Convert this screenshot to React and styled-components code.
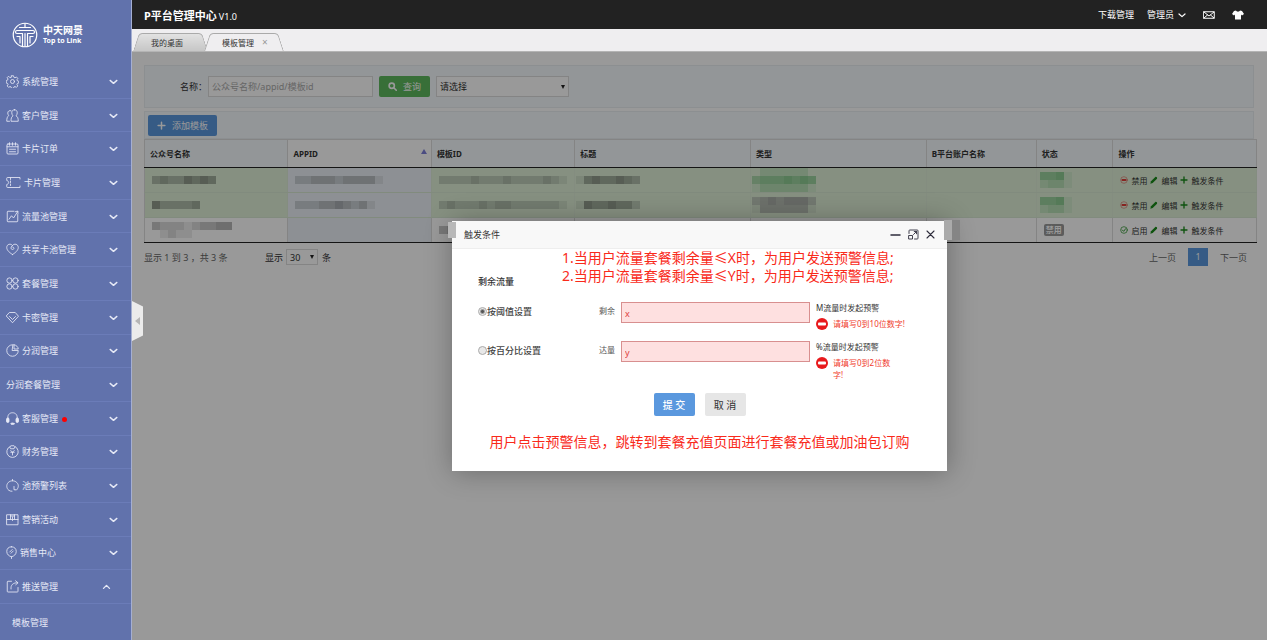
import styled, { createGlobalStyle, css } from "styled-components";

const GlobalStyle = createGlobalStyle`
	* {
		box-sizing: border-box;
	}

	body {
		margin: 0;
		font-family: "Noto Sans", "Noto Sans CJK SC", sans-serif;
		font-size: 9px;
		color: #333;
	}

	button,
	input,
	select {
		font: inherit;
	}

	a {
		color: inherit;
		text-decoration: none;
	}
`;

/* ---------- icons ---------- */

const StrokeIcon = styled.svg`
	flex: none;
	width: ${({ $w = 13 }) => $w}px;
	height: ${({ $h = 13 }) => $h}px;
	fill: none;
	stroke: currentColor;
	stroke-width: ${({ $stroke = 1.7 }) => $stroke};
	stroke-linecap: round;
	stroke-linejoin: round;
`;

const ICONS = {
	gear: (
		<>
			<circle cx="13" cy="13" r="4" />
			<path d="M11 1.500h4l.8 3.200 2.200.9 2.800-1.700 2.800 2.800-1.700 2.800.9 2.200 2.700.8v3.600l-2.700.8-.9 2.200 1.700 2.800-2.800 2.800-2.800-1.700-2.200.9-.8 2.900h-4l-.8-2.900-2.200-.9-2.800 1.700-2.800-2.800 1.700-2.800-.9-2.200-2.700-.8V11l2.700-.8.9-2.200-1.700-2.800 2.800-2.800L8 5.600l2.200-.9z" />
		</>
	),
	users: (
		<>
			<path d="M10 3.500C7 2 3.500 4.500 3.500 8c0 2 .8 3.500 2 5-3 2-4 6-4 11.500H7" />
			<path d="M17 1.500c3.500 0 5.500 2.500 5.500 6 0 2.500-1 4.500-2.500 6 3.500 2 4.500 5 4.500 11H10c0-6 1-9 4-11-1.500-1.500-2.500-3.500-2.500-6 0-3.500 2-6 5.500-6z" />
		</>
	),
	calendar: (
		<>
			<rect x="2" y="4" width="22" height="20" rx="2" />
			<path d="M2 9.500h22M7 1.500v5M13 1.500v5M19 1.500v5M7 14.500h12M7 19.500h12" />
		</>
	),
	card: (
		<path d="M28 6V3H3a1.500 1.500 0 0 0-1.500 1.500V9c5 1 5 7 0 8v4.500A1.500 1.500 0 0 0 3 23h25v-3M9 4v3M9 10v3M9 16v3" />
	),
	flow: (
		<path d="M16 2.500H4A1.500 1.500 0 0 0 2.500 4v18A1.500 1.500 0 0 0 4 23.500h18a1.500 1.500 0 0 0 1.500-1.500V9M6 18.500l5-7 4 4.500L23.500 3M18.500 3.500l5-1.500.5 5" />
	),
	heart: (
		<path d="M13 23C8 20 1.500 15 1.500 9c0-7 8-8.500 11.500-4 3.500-4.500 11.500-3 11.500 4 0 6-6.500 11-11.500 14zM13 5c-4 2-4 8 0 8s3.500-5 .5-5" />
	),
	clover: (
		<>
			<circle cx="7" cy="7" r="5.300" />
			<circle cx="19" cy="7" r="5.300" />
			<circle cx="7" cy="19" r="5.300" />
			<circle cx="19" cy="19" r="5.300" />
		</>
	),
	gem: (
		<path d="M7.500 3h11L25 10.500 13 23.500 1 10.500zM7 11l6 6 6-6" />
	),
	pie: (
		<>
			<path d="M13 1.500A11.500 11.500 0 1 0 24.500 13H13z" />
			<path d="M16 1.500V10h8.500C24.500 6 20.500 2 16 1.500z" />
		</>
	),
	headset: (
		<>
			<path d="M4 14C2 6 7 1.500 13 1.500S24 6 22 14" />
			<rect x="1" y="12" width="5" height="9" rx="2.500" fill="currentColor" />
			<rect x="20" y="12" width="5" height="9" rx="2.500" fill="currentColor" />
			<ellipse cx="13" cy="23.500" rx="3.500" ry="1.500" fill="currentColor" />
		</>
	),
	money: (
		<>
			<path d="M8 3a11.500 11.500 0 1 0 10 0M8 3.500L10 1.500h6l2 2-2 4h-6z" />
			<path d="M9.500 11l3.500 3.500 3.500-3.500M9.500 14.500h7M13 14.500V20" />
		</>
	),
	pool: (
		<path d="M21 22C25.500 18 26 11 21.500 7 17 2.500 9 2.500 4.500 7S1 19 5.500 22.500c2 1.500 4 2 6.500 2M13 1v2.500M16 15v6.500h4" />
	),
	box: (
		<path d="M2 3.500h22v20H2zM2 13h7M17 13h7M9 3.500V13h3M17 3.500V13h-3M13 8v7M9 6h8" />
	),
	balloon: (
		<path d="M11 1.500c6 0 9.500 4 9.500 9.500S16 20.500 11 21.500C6 20.500 1.500 16.500 1.500 11S5 1.500 11 1.500zM11 21.500V25M7.500 12l5-5M10 14.500l4.500-4.500" />
	),
	share: (
		<path d="M11 2.500H4A1.500 1.500 0 0 0 2.500 4v18.500A1.500 1.500 0 0 0 4 24h18.500a1.500 1.500 0 0 0 1.500-1.500V15M10 18C9 10 14 5 23.500 5.500M19 1.500l5 4-4.500 4" />
	),
};

const Chevron = ({ up, size = 9 }) => (
	<StrokeIcon $w={size} $h={size} $stroke={1.8} viewBox="0 0 12 12">
		<path d={up ? "M2 8.500l4-4 4 4" : "M1.500 4.500L6 8.500l4.500-4"} />
	</StrokeIcon>
);

const Plus = ({ size = 8 }) => (
	<StrokeIcon $w={size} $h={size} $stroke={2} viewBox="0 0 12 12">
		<path d="M6 1.500v9M1.500 6h9" />
	</StrokeIcon>
);

/* ---------- shell ---------- */

const Page = styled.div`
	position: relative;
	display: flex;
	height: 100vh;
	overflow: hidden;
`;

const Sidebar = styled.aside`
	display: flex;
	flex-direction: column;
	flex: none;
	width: 132px;
	background: #6172ac;
	border-right: 1px solid #a5afd2;
	color: #e6e9f6;
`;

const Logo = styled.a`
	display: flex;
	align-items: center;
	gap: 5px;
	height: 65px;
	padding: 5px 0 0 12px;
	color: #fff;
`;

const LogoText = styled.span`
	display: flex;
	flex-direction: column;
	font-weight: 700;
`;

const LogoName = styled.span`
	font-size: 10px;
	line-height: 11px;
`;

const LogoSlogan = styled.span`
	font-size: 7px;
	line-height: 9px;
`;

const Menu = styled.nav`
	flex: 1;
	display: grid;
	grid-auto-rows: minmax(33px, 1fr);
`;

const MenuItem = styled.a`
	display: flex;
	align-items: center;
	gap: 3px;
	padding: 0 ${({ $open }) => ($open ? 20 : 13)}px 0 6px;
	border-bottom: 1px solid #6b7cb8;
`;

const MenuLabel = styled.span`
	flex: 1;
`;

const Dot = styled.i`
	display: inline-block;
	width: 5px;
	height: 5px;
	margin-left: 4px;
	border-radius: 50%;
	background: #f00;
	vertical-align: middle;
`;

const SubItem = styled.a`
	display: flex;
	align-items: center;
	height: 36px;
	padding-left: 12px;
`;

const Column = styled.div`
	flex: 1;
	min-width: 0;
	display: flex;
	flex-direction: column;
`;

const TopBar = styled.header`
	display: flex;
	align-items: center;
	height: 29px;
	padding: 0 23px 0 12px;
	background: #222;
	color: #fff;
`;

const Title = styled.h1`
	margin: 0;
	font-size: 11px;
	font-weight: 700;
`;

const Version = styled.span`
	flex: 1;
	padding: 3px 0 0 2px;
`;

const TopLinks = styled.div`
	display: flex;
	align-items: center;
`;

const TopLink = styled.a`
	display: flex;
	align-items: center;
	gap: 4px;
	margin-left: ${({ $gap = 13 }) => $gap}px;
`;

const TabBar = styled.div`
	display: flex;
	align-items: flex-end;
	height: 23px;
	padding-left: 4px;
	background: #efeef0;
	border-bottom: 1px solid #b4b4b4;
`;

const TabGroup = styled.div`
	display: flex;
	isolation: isolate;
`;

const Tab = styled.div`
	position: relative;
	z-index: ${({ $active }) => ($active ? 1 : 0)};
	display: flex;
	align-items: center;
	gap: 8px;
	width: ${({ $active }) => ($active ? 74 : 69)}px;
	height: 18px;
	margin-right: 2px;
	padding-left: 15px;
	font-size: 8px;

	&::before,
	&::after {
		content: "";
		position: absolute;
		z-index: -1;
		top: 0;
		bottom: 0;
		width: 60%;
		border: 1px solid #aaa;
		border-bottom: 0;
		background: ${({ $active }) =>
			$active ? "#efeef0" : "linear-gradient(#e2e2e2, #c6c6c6)"};
	}

	&::before {
		left: 0;
		border-right: 0;
		border-radius: 4px 0 0 0;
		transform: skewX(-18deg);
	}

	&::after {
		right: 0;
		border-left: 0;
		border-radius: 0 4px 0 0;
		transform: skewX(18deg);
	}
`;

const TabClose = styled.button`
	padding: 0;
	border: 0;
	background: none;
	color: #999;
	font-size: 10px;
	line-height: 10px;
`;

const Handle = styled.button`
	position: absolute;
	z-index: 3;
	top: 50%;
	left: 132px;
	width: 11px;
	height: 40px;
	margin-top: -19px;
	padding: 0 0 0 3px;
	border: 0;
	background: #ebebeb;
	clip-path: polygon(0 0, 100% 14%, 100% 86%, 0 100%);

	&::before {
		content: "";
		display: block;
		width: 0;
		border: 4px solid transparent;
		border-left: 0;
		border-right: 5px solid #b5b5b5;
	}
`;

const Content = styled.main`
	position: relative;
	flex: 1;
	display: flex;
	flex-direction: column;
	padding: 13px 10px 0 12px;
	background: #fff;
`;

/* ---------- filters ---------- */

const Panel = styled.div`
	display: flex;
	align-items: center;
	height: ${({ $tall }) => ($tall ? 43 : 28)}px;
	margin: 0 3px ${({ $tall }) => ($tall ? 3 : 0)}px 0;
	padding-left: ${({ $tall }) => ($tall ? 35 : 3)}px;
	border: 1px solid #e9eef2;
	background: #f5fafe;
`;

const SearchInput = styled.input`
	width: 165px;
	height: 21px;
	margin: 0 6px 0 1px;
	padding: 0 3px;
	border: 1px solid #ddd;
	background: #fff;

	&::placeholder {
		color: #aaa;
	}
`;

const Button = styled.button`
	display: flex;
	align-items: center;
	justify-content: center;
	gap: 6px;
	height: 21px;
	padding: 0 9px;
	border: 0;
	border-radius: 2px;
	background: ${({ $color }) => $color};
	color: #fff;
`;

const Select = styled.select`
	appearance: none;
	width: ${({ $w }) => $w}px;
	height: ${({ $h }) => $h}px;
	padding: 0 3px;
	border: 1px solid #ddd;
	border-radius: 0;
	background: #fff;
	color: #333;
`;

const SelectBox = styled.span`
	position: relative;
	display: inline-flex;
	margin: 0 4px 0 ${({ $gap }) => $gap}px;

	&::after {
		content: "";
		position: absolute;
		top: 50%;
		right: 4px;
		margin-top: -2px;
		border: 2px solid transparent;
		border-top: 4px solid #222;
		border-bottom: 0;
		pointer-events: none;
	}
`;

/* ---------- table ---------- */

const Table = styled.table`
	width: 100%;
	table-layout: fixed;
	border-collapse: collapse;
	border: 1px solid #ddd;
	border-bottom: 1px solid #222;
	font-size: 8px;
`;

const Th = styled.th`
	position: relative;
	width: ${({ $w }) => $w}%;
	height: 28px;
	padding: 0 5px;
	border-right: 1px solid #ddd;
	border-bottom: 1px solid #222;
	background: ${({ $sorted }) => ($sorted ? "#fff" : "#f5fafe")};
	text-align: left;
	font-weight: 700;

	${({ $sorted }) =>
		$sorted &&
		css`
			&::after {
				content: "";
				position: absolute;
				top: 9px;
				right: 4px;
				border: 3px solid transparent;
				border-top: 0;
				border-bottom: 5px solid #7d7fd8;
			}
		`}
`;

const BodyRow = styled.tr`
	&:last-child td {
		border-bottom: 1px solid #222;
	}
`;

const Td = styled.td`
	height: 25px;
	padding: 0 7px;
	border-right: 1px solid ${({ $green }) => ($green ? "#dcecd6" : "#ddd")};
	border-bottom: 1px solid ${({ $green }) => ($green ? "#d8e8d2" : "#ddd")};
	background: ${({ $green, $sorted }) =>
		$sorted ? "#ebf1f7" : $green ? "#dff0d8" : "#fff"};
`;

const MosaicBox = styled.div`
	margin-left: ${({ $shift = 0 }) => $shift}px;
`;

const MosaicRow = styled.div`
	display: flex;
`;

const MosaicCell = styled.i`
	width: 8px;
	height: 8px;
	background: ${({ $tone }) => $tone};
`;

const TONES = { gray: "#000", green: "#1f9a35", purple: "#4a3a52" };

// every digit of a line is the darkness of one block
const Mosaic = ({ lines, tone = "gray", shift }) => (
	<MosaicBox $shift={shift}>
		{lines.map((line, y) => (
			<MosaicRow key={y}>
				{line.split("").map((c, x) => (
					<MosaicCell key={x} $tone={TONES[tone]} style={{ opacity: c * 0.07 }} />
				))}
			</MosaicRow>
		))}
	</MosaicBox>
);

const Badge = styled.span`
	display: inline-block;
	padding: 0 2px;
	border-radius: 2px;
	background: #999;
	color: #fff;
	font-weight: 700;
	line-height: 12px;
`;

const Actions = styled.div`
	display: flex;
	gap: 3px;
`;

const Action = styled.a`
	display: flex;
	align-items: center;
	gap: 3px;
	white-space: nowrap;

	svg {
		color: ${({ $color = "#188a18" }) => $color};
	}
`;

const TableFoot = styled.div`
	display: flex;
	align-items: center;
	height: 28px;
	color: #333;
`;

const Info = styled.span`
	width: 121px;
	color: #666;
	word-spacing: normal;
`;

const Pager = styled.div`
	flex: 1;
	display: flex;
	align-items: center;
	justify-content: flex-end;
	gap: 12px;
	padding-right: 10px;
	color: #666;
`;

const PageNumber = styled.a`
	width: 20px;
	line-height: 18px;
	background: #5a98de;
	color: #fff;
	text-align: center;
`;

/* ---------- dialog ---------- */

const Shade = styled.div`
	position: absolute;
	inset: 0;
	z-index: 2;
	display: flex;
	align-items: center;
	justify-content: center;
	background: rgba(0, 0, 0, 0.4);
`;

const Dialog = styled.section`
	position: relative;
	width: 495px;
	background: #fff;
	box-shadow: 1px 1px 26px rgba(0, 0, 0, 0.3);
`;

const DialogHead = styled.div`
	display: flex;
	align-items: center;
	height: 28px;
	padding: 0 12px;
	border-bottom: 1px solid #eee;
	background: #f8f8f8;
`;

const DialogTitle = styled.h2`
	flex: 1;
	margin: 0;
	font-size: 9px;
	font-weight: 400;
`;

const HeadButton = styled.button`
	display: flex;
	margin-left: 7px;
	padding: 0;
	border: 0;
	background: none;
	color: #2e2d3c;
`;

const BlurEdge = styled.i`
	position: absolute;
	top: ${({ $right }) => ($right ? -1 : 1)}px;
	${({ $right }) => ($right ? "right: -13px" : "left: -4px")};
	width: ${({ $right }) => ($right ? 16 : 8)}px;
	height: ${({ $right }) => ($right ? 20 : 16)}px;
	background: ${({ $right }) =>
		$right ? "linear-gradient(90deg, #aaa 50%, #858585 50%)" : "#b8b8b8"};
`;

const Intro = styled.div`
	display: flex;
	align-items: flex-end;
	height: 40px;
	padding-left: 26px;
`;

const IntroLabel = styled.span`
	width: 84px;
	font-weight: 500;
	line-height: 15px;
`;

const Note = styled.p`
	margin: 0;
	color: #f92a1b;
	font-size: 14px;
	line-height: 18px;
	white-space: nowrap;
	align-self: flex-start;
	text-align: ${({ $center }) => ($center ? "center" : "left")};
`;

const Form = styled.form`
	padding: 13px 0 20px;
`;

const FormRow = styled.div`
	display: grid;
	grid-template-columns: 100px 37px 189px 1fr;
	align-items: start;
	min-height: 39px;
	padding-left: 26px;
`;

const RadioLabel = styled.label`
	display: flex;
	align-items: center;
	height: 18px;
	color: #444;
	font-weight: 500;
`;

const Radio = styled.input`
	appearance: none;
	width: 9px;
	height: 9px;
	margin: 0;
	border: 1px solid #aaa;
	border-radius: 50%;
	background: #e8e8e8;

	&:checked {
		background: radial-gradient(#555 0 1px, #e8e8e8 3px);
	}
`;

const FieldLabel = styled.label`
	color: #555;
	font-size: 8px;
	line-height: 17px;
	text-align: right;
`;

const FieldInput = styled.input`
	width: 100%;
	height: 21px;
	padding: 2px 3px 0;
	border: 1px solid #d88f8f;
	background: #fee0e0;
	color: #e0403f;
`;

const Field = styled.div`
	margin: 0 -6px 0 6px;
`;

const Hint = styled.div`
	padding-left: 12px;
	font-size: 8px;
	line-height: 12px;
`;

const ErrorText = styled.div`
	display: flex;
	gap: 5px;
	width: ${({ $narrow }) => ($narrow ? 76 : 110)}px;
	margin-top: 4px;
	color: #f03c2e;

	svg {
		flex: none;
	}
`;

const DialogButtons = styled.div`
	display: flex;
	justify-content: center;
	gap: 10px;
	padding: 12px 0 17px;
`;

const DialogButton = styled.button`
	width: 41px;
	height: 23px;
	padding: 0;
	border: 0;
	border-radius: 2px;
	background: ${({ $primary }) => ($primary ? "#5a98de" : "#e6e6e6")};
	color: ${({ $primary }) => ($primary ? "#fff" : "#333")};
	font-size: 10px;
	font-weight: ${({ $primary }) => ($primary ? 500 : 400)};
`;

const MENU = [
	{ icon: "gear", label: "系统管理" },
	{ icon: "users", label: "客户管理" },
	{ icon: "calendar", label: "卡片订单" },
	{ icon: "card", label: "卡片管理", iconWidth: 15 },
	{ icon: "flow", label: "流量池管理" },
	{ icon: "heart", label: "共享卡池管理" },
	{ icon: "clover", label: "套餐管理" },
	{ icon: "gem", label: "卡密管理" },
	{ icon: "pie", label: "分润管理" },
	{ label: "分润套餐管理" },
	{ icon: "headset", label: "客服管理", dot: true },
	{ icon: "money", label: "财务管理" },
	{ icon: "pool", label: "池预警列表" },
	{ icon: "box", label: "营销活动" },
	{ icon: "balloon", label: "销售中心", iconWidth: 11 },
	{ icon: "share", label: "推送管理", open: true },
];

const COLUMNS = [
	{ name: "公众号名称", width: 12.9 },
	{ name: "APPID", width: 12.9, sorted: true },
	{ name: "模板ID", width: 12.9 },
	{ name: "标题", width: 15.8 },
	{ name: "类型", width: 15.8 },
	{ name: "B平台账户名称", width: 9.9 },
	{ name: "状态", width: 6.9 },
	{ name: "操作", width: 12.9 },
];

const ROWS = [
	{
		active: true,
		name: ["34335454"],
		appid: ["22333233331"],
		template: ["2222322232222321"],
		title: ["14544543"],
		type: ["02222220", "45556565", "13333331"],
		tone: "green",
	},
	{
		active: true,
		name: ["533334"],
		appid: ["2223343231"],
		template: ["2322232332222221"],
		title: ["15445442"],
		type: ["34545553", "14444441"],
		tone: "purple",
	},
	{
		name: ["3222123344", "0121100000"],
		template: ["34"],
	},
];

const SidebarMenu = () => (
	<Sidebar>
		<Logo href="#">
			<StrokeIcon $w={26} $h={26} $stroke={2.4} viewBox="0 0 52 52">
				<circle cx="26" cy="26" r="23.500" />
				<path d="M15 11h22M26 3v8M10 17h32c2 0 3 1 3 3s-1 3-3 3H31v25M42 23H31M10 17c-2 0-3 1-3 3s1 3 3 3h11v25M10 29h6v13M42 29h-6v13M26 23v26" />
			</StrokeIcon>
			<LogoText>
				<LogoName>中天网景</LogoName>
				<LogoSlogan>Top to Link</LogoSlogan>
			</LogoText>
		</Logo>
		<Menu>
			{MENU.map(({ icon, label, iconWidth = 13, dot, open }) => (
				<MenuItem key={label} href="#" $open={open}>
					{icon && (
						<StrokeIcon $w={iconWidth} viewBox={`0 0 ${iconWidth * 2} 26`}>
							{ICONS[icon]}
						</StrokeIcon>
					)}
					<MenuLabel>
						{label}
						{dot && <Dot />}
					</MenuLabel>
					<Chevron up={open} />
				</MenuItem>
			))}
		</Menu>
		<SubItem href="#">模板管理</SubItem>
	</Sidebar>
);

const Header = () => (
	<TopBar>
		<Title>P平台管理中心</Title>
		<Version>V1.0</Version>
		<TopLinks>
			<TopLink href="#">下载管理</TopLink>
			<TopLink href="#">
				管理员 <Chevron size={8} />
			</TopLink>
			<TopLink href="#" aria-label="消息" $gap={17}>
				<StrokeIcon $w={12} $h={8} $stroke={2} viewBox="0 0 24 16">
					<path d="M1.500 1.500h21v13h-21zM2 2l10 8L22 2M2 14l7-6M22 14l-7-6" />
				</StrokeIcon>
			</TopLink>
			<TopLink href="#" aria-label="换肤" $gap={17}>
				<svg width="12" height="10" viewBox="0 0 24 20" fill="currentColor">
					<path d="M8 1c1 3 7 3 8 0l4 1 4 6-4 3-2-2v10H6V9l-2 2-4-3 4-6z" />
				</svg>
			</TopLink>
		</TopLinks>
	</TopBar>
);

const RowActions = ({ active }) => (
	<Actions>
		<Action href="#" $color={active ? "#e00000" : "#188a18"}>
			<StrokeIcon $w={8} $h={8} $stroke={1} viewBox="0 0 12 12">
				<circle cx="6" cy="6" r="5" strokeOpacity={active ? 0.5 : 1} />
				{active ? (
					<path d="M3.500 6h5" strokeWidth="2.500" />
				) : (
					<path d="M3.500 6l2 2 3-4" strokeWidth="1.300" />
				)}
			</StrokeIcon>
			{active ? "禁用" : "启用"}
		</Action>
		<Action href="#">
			<svg width="8" height="8" viewBox="0 0 12 12" fill="currentColor">
				<path d="M.5 11.500l1-3.500L8 1.500c1-1 3.500 1 2.500 2.500L4 10.500z" />
			</svg>
			编辑
		</Action>
		<Action href="#">
			<Plus />
			触发条件
		</Action>
	</Actions>
);

const TemplateTable = () => (
	<Table>
		<thead>
			<tr>
				{COLUMNS.map(({ name, width, sorted }) => (
					<Th key={name} $w={width} $sorted={sorted}>
						{name}
					</Th>
				))}
			</tr>
		</thead>
		<tbody>
			{ROWS.map((row, i) => (
				<BodyRow key={i}>
					<Td $green={row.active}>
						<Mosaic lines={row.name} />
					</Td>
					<Td $green={row.active} $sorted>
						{row.appid && <Mosaic lines={row.appid} />}
					</Td>
					<Td $green={row.active}>
						<Mosaic lines={row.template} />
					</Td>
					<Td $green={row.active}>
						{row.title && <Mosaic lines={row.title} shift={-6} />}
					</Td>
					<Td $green={row.active}>
						{row.type && <Mosaic lines={row.type} tone={row.tone} shift={-6} />}
					</Td>
					<Td $green={row.active} />
					<Td $green={row.active}>
						{row.active ? (
							<Mosaic lines={["5561", "2331"]} tone="green" shift={-4} />
						) : (
							<Badge>禁用</Badge>
						)}
					</Td>
					<Td $green={row.active}>
						<RowActions active={row.active} />
					</Td>
				</BodyRow>
			))}
		</tbody>
	</Table>
);

const ErrorMessage = ({ children, narrow }) => (
	<ErrorText role="alert" $narrow={narrow}>
		<svg width="12" height="12" viewBox="0 0 24 24">
			<circle cx="12" cy="12" r="12" fill="#e8191c" />
			<rect x="4" y="9" width="16" height="6" rx="2" fill="#fff" />
		</svg>
		<span>{children}</span>
	</ErrorText>
);

const TriggerDialog = () => (
	<Dialog role="dialog" aria-labelledby="dialog-title">
		<DialogHead>
			<DialogTitle id="dialog-title">触发条件</DialogTitle>
			<HeadButton aria-label="最小化">
				<StrokeIcon $w={11} $h={11} $stroke={3} viewBox="0 0 22 22">
					<path d="M2 12h18" />
				</StrokeIcon>
			</HeadButton>
			<HeadButton aria-label="最大化">
				<StrokeIcon $w={11} $h={11} $stroke={1.8} viewBox="0 0 22 22">
					<path d="M2 9V3.500A1.500 1.500 0 0 1 3.500 2h15A1.500 1.500 0 0 1 20 3.500v15a1.500 1.500 0 0 1-1.500 1.500H13M2 13h7v7H2zM11 11l6-6M12.500 5H17v4.500" />
				</StrokeIcon>
			</HeadButton>
			<HeadButton aria-label="关闭">
				<StrokeIcon $w={9} $h={9} $stroke={2.2} viewBox="0 0 18 18">
					<path d="M2 2l14 14M16 2L2 16" />
				</StrokeIcon>
			</HeadButton>
		</DialogHead>
		<BlurEdge />
		<BlurEdge $right />
		<Intro>
			<IntroLabel>剩余流量</IntroLabel>
			<Note>
				1.当用户流量套餐剩余量≤X时，为用户发送预警信息;
				<br />
				2.当用户流量套餐剩余量≤Y时，为用户发送预警信息;
			</Note>
		</Intro>
		<Form onSubmit={(e) => e.preventDefault()}>
			<FormRow>
				<RadioLabel>
					<Radio type="radio" name="mode" defaultChecked />
					按阈值设置
				</RadioLabel>
				<FieldLabel htmlFor="rest">剩余</FieldLabel>
				<Field>
					<FieldInput id="rest" defaultValue="x" />
				</Field>
				<Hint>
					M流量时发起预警
					<ErrorMessage>请填写0到10位数字!</ErrorMessage>
				</Hint>
			</FormRow>
			<FormRow>
				<RadioLabel>
					<Radio type="radio" name="mode" />
					按百分比设置
				</RadioLabel>
				<FieldLabel htmlFor="reach">达量</FieldLabel>
				<Field>
					<FieldInput id="reach" defaultValue="y" />
				</Field>
				<Hint>
					%流量时发起预警
					<ErrorMessage narrow>请填写0到2位数字!</ErrorMessage>
				</Hint>
			</FormRow>
			<DialogButtons>
				<DialogButton type="submit" $primary>
					提 交
				</DialogButton>
				<DialogButton type="button">取 消</DialogButton>
			</DialogButtons>
			<Note $center>
				用户点击预警信息，跳转到套餐充值页面进行套餐充值或加油包订购
			</Note>
		</Form>
	</Dialog>
);

const App = () => (
	<Page>
		<GlobalStyle />
		<SidebarMenu />
		<Column>
			<Header />
			<TabBar>
				<TabGroup>
					<Tab>我的桌面</Tab>
					<Tab $active>
						模板管理
						<TabClose aria-label="关闭">×</TabClose>
					</Tab>
				</TabGroup>
			</TabBar>
			<Content>
				<Panel $tall>
					<label htmlFor="keyword">名称：</label>
					<SearchInput id="keyword" placeholder="公众号名称/appid/模板id" />
					<Button $color="#5eb95e">
						<StrokeIcon $w={9} $h={9} $stroke={2.2} viewBox="0 0 12 12">
							<circle cx="5" cy="5" r="3.500" />
							<path d="M8 8l3 3" />
						</StrokeIcon>
						查询
					</Button>
					<SelectBox $gap={6}>
						<Select aria-label="类型" $w={133} $h={21}>
							<option>请选择</option>
						</Select>
					</SelectBox>
				</Panel>
				<Panel>
					<Button $color="#5a98de">
						<Plus size={9} />
						添加模板
					</Button>
				</Panel>
				<TemplateTable />
				<TableFoot>
					<Info>显示 1 到 3 ，共 3 条</Info>
					<label htmlFor="size">显示</label>
					<SelectBox $gap={3}>
						<Select id="size" $w={32} $h={16}>
							<option>30</option>
						</Select>
					</SelectBox>
					条
					<Pager>
						<a href="#">上一页</a>
						<PageNumber href="#">1</PageNumber>
						<a href="#">下一页</a>
					</Pager>
				</TableFoot>
				<Shade>
					<TriggerDialog />
				</Shade>
			</Content>
		</Column>
		<Handle aria-label="收起菜单" />
	</Page>
);

export default App;
